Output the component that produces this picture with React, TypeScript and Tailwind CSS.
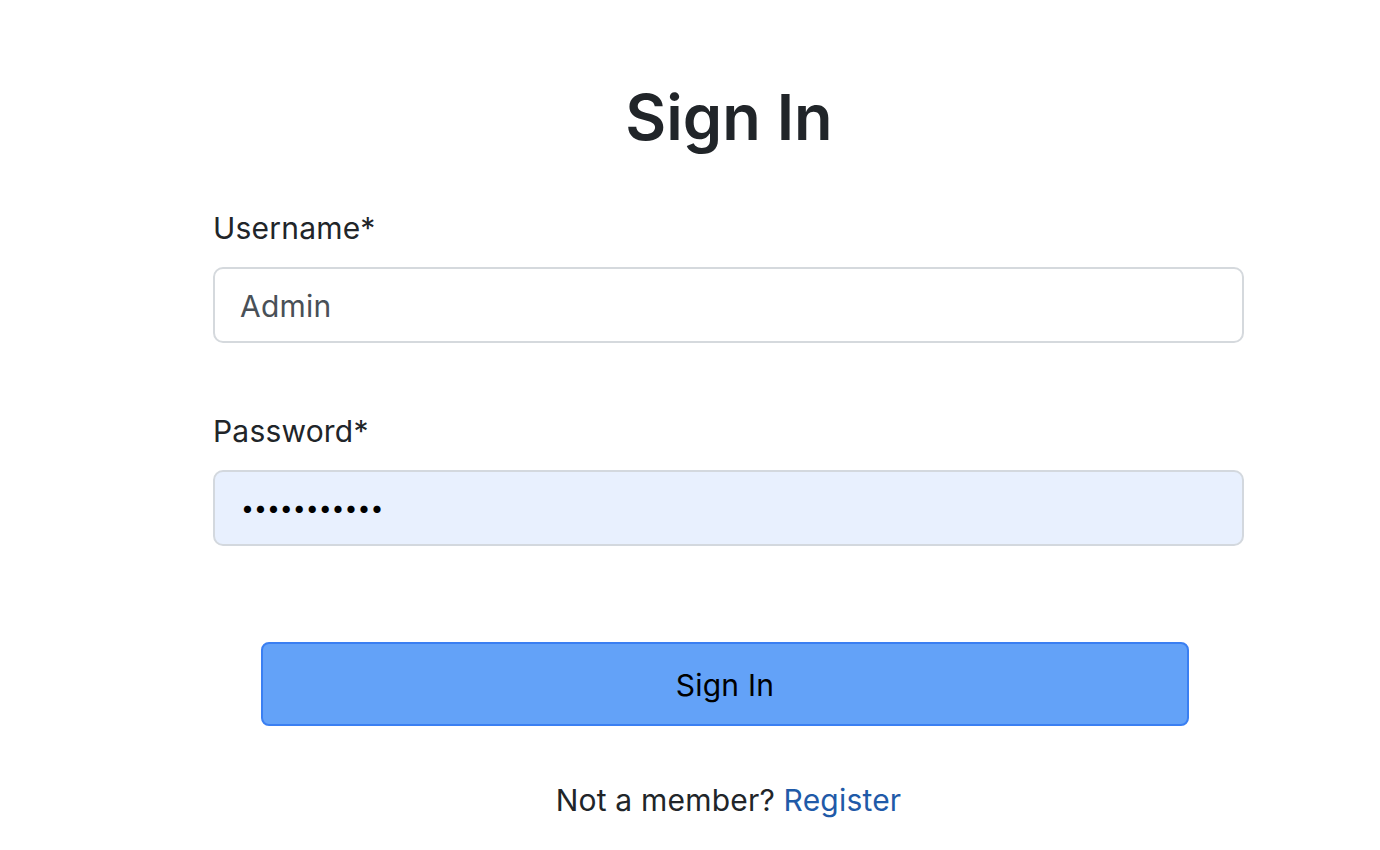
import React from "react";

export default function App() {
  return (
    <div
      className="min-h-[850px] w-full bg-white text-[#212529]"
      style={{ fontFamily: "Inter, 'Noto Sans', sans-serif" }}
    >
      <div className="ml-[213px] w-[1031px] pt-[80px]">
        <h1 className="text-center text-[63px] font-semibold leading-[1.2] pl-[1px]">Sign In</h1>

        <div className="mt-[51px]">
          <label className="block text-[30px] leading-[42px] tracking-[0.2px]">Username*</label>
          <div className="mt-[18px] flex h-[76px] items-center rounded-[10px] border-2 border-[#d5d9dd] bg-white pl-[25px] pt-[3px] text-[30px] tracking-[0.2px] text-[#495057]">
            Admin
          </div>
        </div>

        <div className="mt-[67px]">
          <label className="block text-[30px] leading-[42px] tracking-[0.2px]">Password*</label>
          <div className="mt-[18px] flex h-[76px] items-center rounded-[10px] border-2 border-[#d3d8de] bg-[#e8f0fe] pl-[26px] pt-[2px] text-[23px] text-black">
            •••••••••••
          </div>
        </div>

        <div className="mt-[96px] flex pl-[48px] pr-[55px]">
          <button className="flex h-[84px] w-full items-center justify-center rounded-[8px] border-2 border-[#3a7ff2] bg-[#63a2f8] pt-[3px] text-[30px] tracking-[0.2px] text-black">
            Sign In
          </button>
        </div>

        <p className="mt-[53px] text-center text-[30px] leading-[42px] tracking-[0.2px]">
          Not a member? <a className="text-[#1f5aa8]">Register</a>
        </p>
      </div>
    </div>
  );
}
